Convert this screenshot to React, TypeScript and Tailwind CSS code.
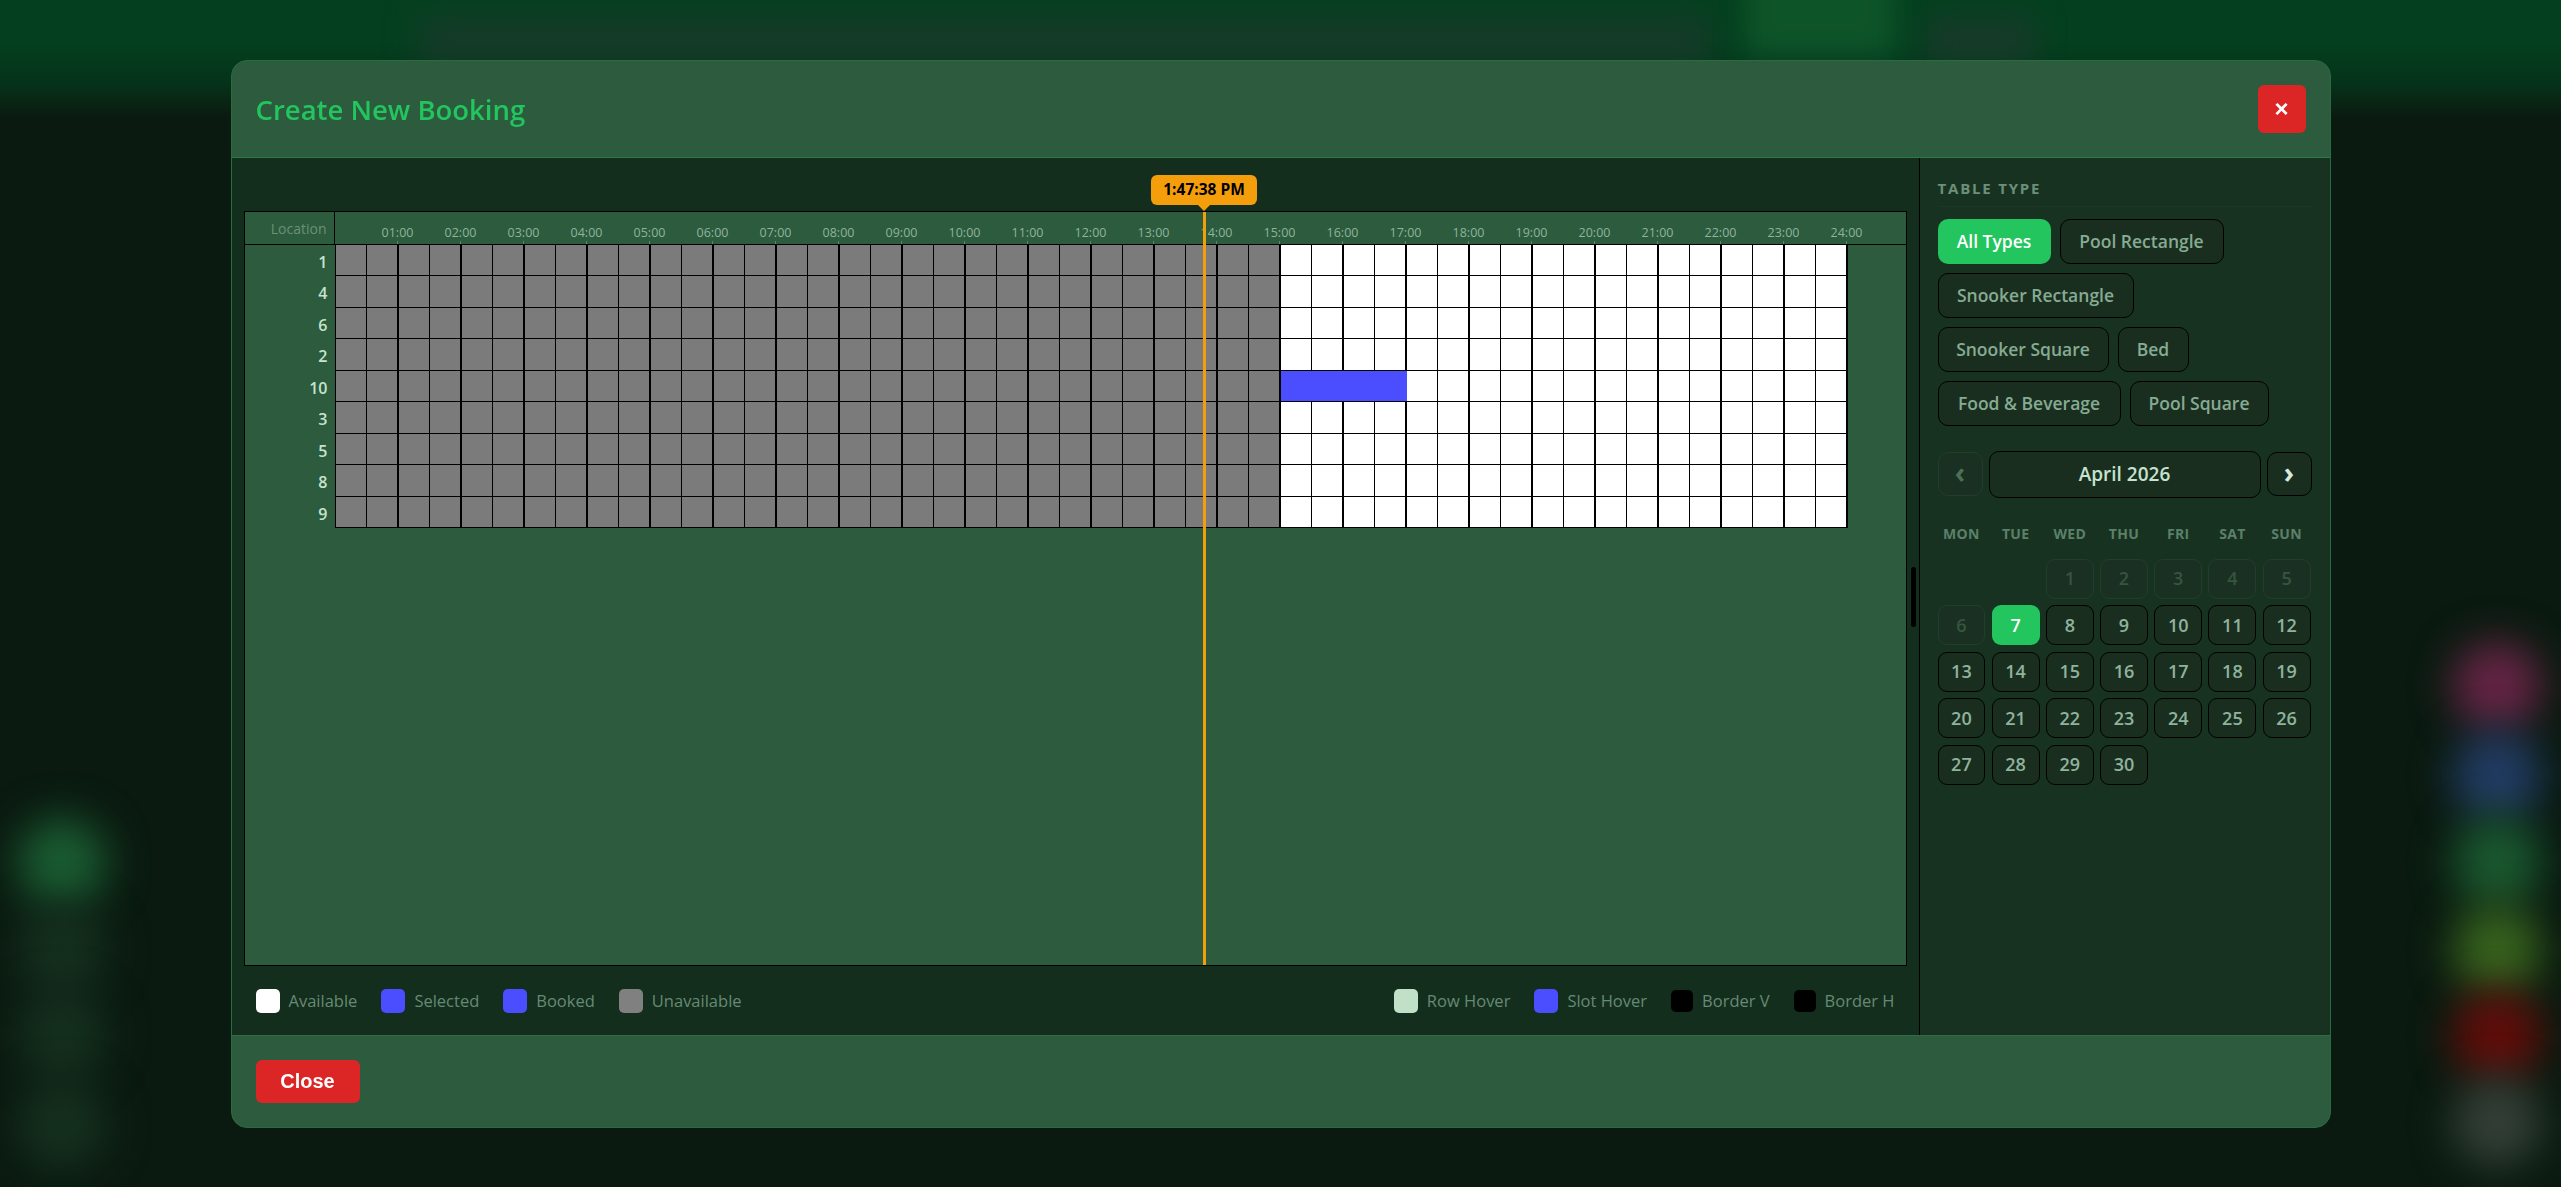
import React from "react";

const hours = Array.from({ length: 24 }, (_, i) => `${String(i + 1).padStart(2, "0")}:00`);
const rows = ["1", "4", "6", "2", "10", "3", "5", "8", "9"];

const tableTypes = [
  { label: "All Types", width: "w-[113px]", active: true },
  { label: "Pool Rectangle", width: "w-[164px]" },
  { label: "Snooker Rectangle", width: "w-[196px]" },
  { label: "Snooker Square", width: "w-[171px]" },
  { label: "Bed", width: "w-[71px]" },
  { label: "Food & Beverage", width: "w-[183px]" },
  { label: "Pool Square", width: "w-[139px]" },
];

const legendLeft = [
  { label: "Available", color: "bg-white" },
  { label: "Selected", color: "bg-[#4a4eff]" },
  { label: "Booked", color: "bg-[#4a4eff]" },
  { label: "Unavailable", color: "bg-[#808080]" },
];

const legendRight = [
  { label: "Row Hover", color: "bg-[#c0e0c8]" },
  { label: "Slot Hover", color: "bg-[#4a4eff]" },
  { label: "Border V", color: "bg-black", small: true },
  { label: "Border H", color: "bg-black", small: true },
];

const weekdays = ["MON", "TUE", "WED", "THU", "FRI", "SAT", "SUN"];

const blobs = [
  { pos: "left-[2452px] top-[641px]", color: "bg-[#652444]" },
  { pos: "left-[2452px] top-[731px]", color: "bg-[#223c64]" },
  { pos: "left-[2452px] top-[817px]", color: "bg-[#1a5830]" },
  { pos: "left-[2452px] top-[905px]", color: "bg-[#37621e]" },
  { pos: "left-[2452px] top-[991px]", color: "bg-[#620d0a]" },
  { pos: "left-[2452px] top-[1077px]", color: "bg-[#333f37]" },
  { pos: "left-[17px] top-[818px]", color: "bg-[#1a5c32]" },
  { pos: "left-[17px] top-[905px]", color: "bg-[#15301f]" },
  { pos: "left-[17px] top-[990px]", color: "bg-[#15301f]" },
  { pos: "left-[17px] top-[1080px]", color: "bg-[#15301f]" },
];

function Backdrop() {
  return (
    <div className="absolute inset-0 overflow-hidden bg-[#0a1a10]">
      <div className="absolute inset-x-0 top-0 h-[118px] bg-linear-to-b from-[#04401f] from-35% via-[#05331a] via-70% to-[#0a1a10]" />
      <div className="absolute left-[420px] top-[16px] h-[50px] w-[1290px] bg-[#163a29] blur-[16px]" />
      <div className="absolute left-[1925px] top-[16px] h-[50px] w-[110px] bg-[#163a29] blur-[14px]" />
      <div className="absolute left-[1745px] -top-8 h-[88px] w-[150px] bg-[#0e5429] blur-[14px]" />
      {blobs.map((b) => (
        <div key={b.pos} className={`absolute h-[90px] w-[90px] rounded-full blur-[20px] ${b.pos} ${b.color}`} />
      ))}
    </div>
  );
}

function Grid() {
  return (
    <div className="relative mx-3 flex-1 border border-black bg-[#2c5b3e]">
      <div className="flex h-[33px] border-b border-black">
        <div className="w-[90px] border-r border-black pr-[7px] pt-[7px] text-right text-[14px] leading-[20px] text-[#6b9077]">
          Location
        </div>
        <div className="grid w-[1512px] grid-cols-[repeat(24,minmax(0,1fr))]">
          {hours.map((h) => (
            <div key={h} className="relative flex items-end justify-end pb-[2px]">
              <span className="translate-x-1/2 text-[12.5px] leading-[18px] text-[#8fb39c]">{h}</span>
              <span className="absolute bottom-0 right-0 h-[3px] w-px bg-[#5a8a6a]" />
            </div>
          ))}
        </div>
      </div>
      {rows.map((row) => (
        <div key={row} className="flex h-[31.5px]">
          <div className="w-[90px] pr-[7px] pt-[5px] text-right text-[16px] font-semibold leading-[24px] text-[#c4e4cf]">
            {row}
          </div>
          <div className="grid w-[1513px] grid-cols-[repeat(48,minmax(0,1fr))] border-l border-black">
            {Array.from({ length: 48 }, (_, i) => {
              if (row === "10" && i >= 30 && i <= 33) {
                return <div key={i} className="border-b border-black bg-[#4a4eff]" />;
              }
              return (
                <div
                  key={i}
                  className={`border-b border-black ${i < 30 ? "bg-[#7b7b7b]" : "bg-white"} ${i % 2 === 1 ? "border-r-2" : "border-r"}`}
                />
              );
            })}
          </div>
        </div>
      ))}
      {/* current time */}
      <div className="absolute bottom-0 left-[958px] top-0 w-[3px] bg-[#f59e0b]">
        <div className="absolute -top-[37px] left-1/2 flex h-[30px] w-[106px] -translate-x-1/2 items-center justify-center rounded-md bg-[#f59e0b] text-[15.5px] font-bold text-black">
          1:47:38 PM
          <div className="absolute -bottom-[6px] left-1/2 h-0 w-0 -translate-x-1/2 border-x-[6px] border-t-[6px] border-x-transparent border-t-[#f59e0b]" />
        </div>
      </div>
    </div>
  );
}

function Legend({ items }: { items: { label: string; color: string; small?: boolean }[] }) {
  return (
    <div className="flex items-center gap-[24px]">
      {items.map((it) => (
        <div key={it.label} className="flex items-center gap-[9px]">
          <span className={`${it.small ? "h-[22px] w-[22px]" : "h-[24px] w-[24px]"} rounded-[5px] ${it.color}`} />
          <span className="text-[16.5px] text-[#668a73]">{it.label}</span>
        </div>
      ))}
    </div>
  );
}

function Sidebar() {
  const blanks = [0, 1];
  const days = Array.from({ length: 30 }, (_, i) => i + 1);
  return (
    <aside className="w-[411px] border-l border-black bg-[#183222] px-[18px] pt-[21px]">
      <div className="h-[28px] border-b border-[#1c3826] text-[15px] font-bold leading-[18px] tracking-[1.8px] text-[#6b9077]">
        TABLE TYPE
      </div>
      <div className="mt-[12px] flex flex-wrap gap-[9px]">
        {tableTypes.map((t) => (
          <button
            key={t.label}
            className={`h-[45px] rounded-[10px] text-[17.5px] font-semibold ${t.width} ${
              t.active ? "bg-[#22c55e] text-white" : "border border-black bg-[#1a2e20] text-[#86ab93]"
            }`}
          >
            {t.label}
          </button>
        ))}
      </div>
      <div className="mt-[25px] flex w-[374px] items-center gap-[6px]">
        <button className="h-[44px] w-[45px] rounded-[10px] border border-[#213e2b] bg-[#1a3022] pb-[4px] text-[28px] font-bold leading-none text-[#4e7059]">
          ‹
        </button>
        <div className="flex h-[47px] flex-1 items-center justify-center rounded-[10px] border border-black bg-[#1a2e20] text-[19px] font-semibold text-[#c4e4cf]">
          April 2026
        </div>
        <button className="h-[44px] w-[45px] rounded-[10px] border border-black bg-[#1a2e20] pb-[4px] text-[28px] font-bold leading-none text-[#d6eadd]">
          ›
        </button>
      </div>
      <div className="mt-[26px] grid w-[373px] grid-cols-7 gap-x-[6.4px] text-center text-[14px] font-bold leading-[20px] tracking-[0.3px] text-[#5c8069]">
        {weekdays.map((d) => (
          <div key={d}>{d}</div>
        ))}
      </div>
      <div className="mt-[15px] grid w-[373px] grid-cols-7 gap-x-[6.4px] gap-y-[6.5px]">
        {blanks.map((b) => (
          <div key={b} />
        ))}
        {days.map((d) => {
          let cls = "border border-black bg-[#1a2e20] text-[#8fb39c]";
          if (d < 7) cls = "border border-[#213e2b] bg-[#1a3022] text-[#36553f]";
          if (d === 7) cls = "bg-[#22c55e] text-white font-bold";
          return (
            <div key={d} className={`flex h-[40px] items-center justify-center rounded-[9px] text-[18px] font-semibold ${cls}`}>
              {d}
            </div>
          );
        })}
      </div>
    </aside>
  );
}

export default function App() {
  return (
    <div className="relative h-screen w-full overflow-hidden font-['Open_Sans',sans-serif]">
      <Backdrop />
      <div className="fixed inset-0 flex items-center justify-center">
        <div className="flex h-[1068px] w-[2100px] flex-col overflow-hidden rounded-2xl border border-[#2a6b40] bg-[#2c5b3e]">
          <header className="flex h-[97px] shrink-0 items-center justify-between border-b border-[#2a7a48] px-6">
            <h1 className="pt-[2px] text-[27.5px] font-semibold text-[#22c55e]">Create New Booking</h1>
            <button className="flex h-[48px] w-[48px] items-center justify-center rounded-md bg-[#dc2626] font-['Liberation_Sans',sans-serif] text-[24px] font-bold text-white">
              ×
            </button>
          </header>
          <div className="relative flex min-h-0 flex-1">
            <div className="flex min-w-0 flex-1 flex-col bg-[#142e1e] pt-[53px]">
              <Grid />
              <div className="flex h-[69px] shrink-0 items-center justify-between px-6 pt-[2px]">
                <Legend items={legendLeft} />
                <Legend items={legendRight} />
              </div>
            </div>
            <div className="absolute left-[1679px] top-[409px] h-[60px] w-[5px] rounded-full bg-black" />
            <Sidebar />
          </div>
          <footer className="flex h-[92px] shrink-0 items-center border-t border-[#2f6b47] px-6">
            <button className="h-[43px] w-[104px] rounded-md bg-[#dc2626] font-['Liberation_Sans',sans-serif] text-[20px] font-bold text-white">
              Close
            </button>
          </footer>
        </div>
      </div>
    </div>
  );
}
